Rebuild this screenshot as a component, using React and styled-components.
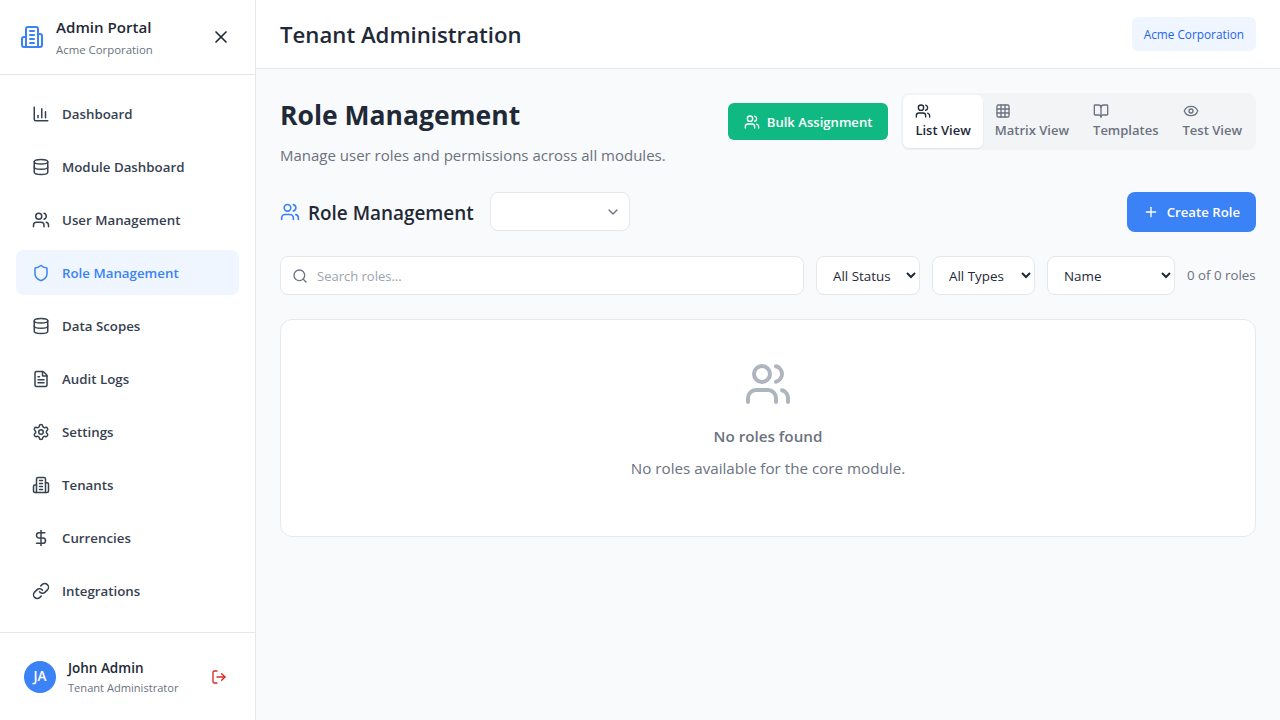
import React from 'react';
import styled, { createGlobalStyle } from 'styled-components';
import {
  BarChart3, BookOpen, Database, DollarSign, Eye, FileText, Grid3x3, Link, LogOut,
  Plus, Search, Settings, Shield, Users, X,
} from 'lucide-react';

const GlobalStyle = createGlobalStyle`
  * { box-sizing: border-box; }
  html, body { margin: 0; padding: 0; height: 100%; }
  body {
    font-family: "Open Sans", "Noto Sans", sans-serif;
    line-height: 1.5;
    color: #1f2937;
    background: #f9fafb;
  }
  button, input, select { font-family: inherit; }
`;

const chevron = `url("data:image/svg+xml,%3Csvg xmlns='http://www.w3.org/2000/svg' width='16' height='16' viewBox='0 0 24 24' fill='none' stroke='%236b7280' stroke-width='2' stroke-linecap='round' stroke-linejoin='round'%3E%3Cpath d='m6 9 6 6 6-6'/%3E%3C/svg%3E")`;

const Shell = styled.div`
  display: flex;
  width: 1280px;
  height: 720px;
  overflow: hidden;
`;

const Sidebar = styled.aside`
  width: 256px;
  flex: none;
  display: flex;
  flex-direction: column;
  background: #fff;
  border-right: 1px solid #e5e7eb;
`;

const Brand = styled.div`
  height: 75px;
  display: flex;
  align-items: center;
  gap: 12px;
  padding: 0 24px 0 20px;
  border-bottom: 1px solid #e5e7eb;
  color: #3b82f6;
`;

const BrandText = styled.div`
  flex: 1;
  min-width: 0;
`;

const BrandName = styled.div`
  font-size: 15.1px;
  line-height: 24px;
  font-weight: 600;
  color: #1f2937;
`;

const BrandSub = styled.div`
  margin-top: 2px;
  font-size: 11.4px;
  line-height: 18px;
  color: #6b7280;
`;

const CloseButton = styled.button`
  display: flex;
  padding: 0;
  border: 0;
  background: none;
  color: #1f2937;
`;

const Nav = styled.nav`
  flex: 1;
  display: flex;
  flex-direction: column;
  gap: 8px;
  padding: 16px;
`;

const NavItem = styled.a`
  display: flex;
  align-items: center;
  gap: 12px;
  height: 45px;
  padding: 0 16px;
  border-radius: 8px;
  font-size: 13.3px;
  font-weight: 600;
  color: ${props => props.$active ? '#3b82f6' : '#374151'};
  background: ${props => props.$active ? '#eff6ff' : 'transparent'};
`;

const NavLabel = styled.span`
  margin-top: 2px;
`;

const UserBox = styled.div`
  display: flex;
  align-items: center;
  gap: 12px;
  padding: 24px;
  border-top: 1px solid #e5e7eb;
`;

const Avatar = styled.div`
  width: 32px;
  height: 32px;
  flex: none;
  display: flex;
  align-items: center;
  justify-content: center;
  border-radius: 50%;
  background: #3b82f6;
  color: #fff;
  font-size: 13.5px;
  font-weight: 600;
`;

const UserText = styled.div`
  flex: 1;
  min-width: 0;
`;

const UserName = styled.div`
  padding-top: 1px;
  font-size: 13.5px;
  line-height: 21px;
  font-weight: 600;
  color: #1f2937;
`;

const UserRole = styled.div`
  font-size: 11.1px;
  line-height: 17px;
  color: #6b7280;
`;

const LogoutButton = styled.button`
  display: flex;
  padding: 4px;
  border: 0;
  background: none;
  color: #dc2626;
`;

const Main = styled.main`
  flex: 1;
  min-width: 0;
  display: flex;
  flex-direction: column;
`;

const TopBar = styled.header`
  height: 69px;
  flex: none;
  display: flex;
  align-items: center;
  justify-content: space-between;
  padding: 0 24px;
  background: #fff;
  border-bottom: 1px solid #e5e7eb;
`;

const TopTitle = styled.h1`
  margin: 0;
  padding-top: 2px;
  font-size: 22.2px;
  font-weight: 600;
  color: #1f2937;
`;

const TenantPill = styled.div`
  padding: 8px 12px;
  border-radius: 6px;
  background: #eff6ff;
  color: #2563eb;
  font-size: 11.8px;
  line-height: 18px;
  font-weight: 500;
`;

const Content = styled.div`
  flex: 1;
  padding: 24px;
`;

const PageHead = styled.div`
  display: flex;
  justify-content: space-between;
  align-items: flex-start;
  margin-bottom: 25px;
`;

const PageTitle = styled.h2`
  margin: 0 0 6px;
  font-size: 26.5px;
  font-weight: 700;
  color: #1f2937;
  line-height: 44px;
`;

const PageSub = styled.p`
  margin: 0;
  font-size: 15px;
  line-height: 24px;
  color: #6b7280;
`;

const HeadActions = styled.div`
  display: flex;
  align-items: center;
  gap: 13px;
`;

const BulkButton = styled.button`
  display: flex;
  align-items: center;
  gap: 7px;
  height: 37px;
  padding: 0 16px;
  border: 0;
  border-radius: 6px;
  background: #10b981;
  color: #fff;
  font-size: 13.1px;
  font-weight: 600;
`;

const Tabs = styled.div`
  display: flex;
  padding: 2px;
  border-radius: 8px;
  background: #f3f4f6;
`;

const Tab = styled.button`
  display: flex;
  flex-direction: column;
  align-items: flex-start;
  padding: 8px 12px 7px;
  border: 0;
  border-radius: 6px;
  font-size: 13px;
  line-height: 22px;
  font-weight: 600;
  color: ${props => props.$active ? '#1f2937' : '#6b7280'};
  background: ${props => props.$active ? '#fff' : 'transparent'};
  box-shadow: ${props => props.$active ? '0 1px 2px rgba(0,0,0,0.08)' : 'none'};
`;

const SectionRow = styled.div`
  display: flex;
  align-items: flex-start;
  justify-content: space-between;
  margin-bottom: 24px;
`;

const SectionLeft = styled.div`
  display: flex;
  align-items: center;
  gap: 16px;
`;

const SectionTitle = styled.h3`
  display: flex;
  align-items: center;
  gap: 8px;
  margin: 0;
  padding-top: 3px;
  font-size: 18.9px;
  font-weight: 600;
  color: #1f2937;
  svg { color: #3b82f6; margin-top: -2px; }
`;

const ModuleSelect = styled.select`
  appearance: none;
  width: 140px;
  height: 39px;
  border: 1px solid #e5e7eb;
  border-radius: 8px;
  background: #fff ${chevron} no-repeat right 8px center;
`;

const CreateButton = styled.button`
  display: flex;
  align-items: center;
  gap: 8px;
  height: 40px;
  padding: 0 16px;
  border: 0;
  border-radius: 8px;
  background: #3b82f6;
  color: #fff;
  font-size: 13.2px;
  font-weight: 600;
`;

const Filters = styled.div`
  display: flex;
  align-items: center;
  gap: 12px;
  margin-bottom: 24px;
`;

const SearchBox = styled.div`
  position: relative;
  flex: 1;
  min-width: 0;
  svg {
    position: absolute;
    left: 12px;
    top: 12px;
    color: #6b7280;
  }
`;

const SearchInput = styled.input`
  display: block;
  width: 100%;
  height: 39px;
  padding: 0 16px 0 36px;
  border: 1px solid #e5e7eb;
  border-radius: 8px;
  background: #fff;
  font-size: 13px;
  color: #1f2937;
  &::placeholder { color: #9ca3af; }
`;

const FilterSelect = styled.select`
  flex: none;
  height: 39px;
  padding: 0 0 0 12px;
  border: 1px solid #e5e7eb;
  border-radius: 8px;
  background: #fff;
  font-size: 13.4px;
  color: #1f2937;
  width: ${props => props.$w}px;
`;

const Count = styled.span`
  flex: none;
  width: 69px;
  padding-top: 1px;
  font-size: 13.3px;
  white-space: nowrap;
  color: #6b7280;
`;

const EmptyCard = styled.section`
  height: 218px;
  display: flex;
  flex-direction: column;
  align-items: center;
  padding-top: 40px;
  border: 1px solid #e5e7eb;
  border-radius: 12px;
  background: #fff;
  color: #6b7280;
  svg { color: #9ca3af; opacity: 0.8; }
`;

const EmptyTitle = styled.div`
  margin: 16px 0 8px;
  font-size: 15.2px;
  line-height: 24px;
  font-weight: 600;
`;

const EmptyText = styled.div`
  font-size: 15.2px;
  line-height: 24px;
`;

// the older lucide building-2, the one in the package has changed shape
const Building = ({ size }) => (
  <svg width={size} height={size} viewBox="0 0 24 24" fill="none" stroke="currentColor" strokeWidth="2" strokeLinecap="round" strokeLinejoin="round">
    <path d="M6 22V4a2 2 0 0 1 2-2h8a2 2 0 0 1 2 2v18Z" />
    <path d="M6 12H4a2 2 0 0 0-2 2v6a2 2 0 0 0 2 2h2" />
    <path d="M18 9h2a2 2 0 0 1 2 2v9a2 2 0 0 1-2 2h-2" />
    <path d="M10 6h4" />
    <path d="M10 10h4" />
    <path d="M10 14h4" />
    <path d="M10 18h4" />
  </svg>
);

const navItems = [
  { label: 'Dashboard', Icon: BarChart3 },
  { label: 'Module Dashboard', Icon: Database },
  { label: 'User Management', Icon: Users },
  { label: 'Role Management', Icon: Shield, active: true },
  { label: 'Data Scopes', Icon: Database },
  { label: 'Audit Logs', Icon: FileText },
  { label: 'Settings', Icon: Settings },
  { label: 'Tenants', Icon: Building },
  { label: 'Currencies', Icon: DollarSign },
  { label: 'Integrations', Icon: Link },
];

const tabs = [
  { label: 'List View', Icon: Users, active: true },
  { label: 'Matrix View', Icon: Grid3x3 },
  { label: 'Templates', Icon: BookOpen },
  { label: 'Test View', Icon: Eye },
];

export default function App() {
  return (
    <Shell>
      <GlobalStyle />
      <Sidebar>
        <Brand>
          <Building size={24} />
          <BrandText>
            <BrandName>Admin Portal</BrandName>
            <BrandSub>Acme Corporation</BrandSub>
          </BrandText>
          <CloseButton><X size={20} /></CloseButton>
        </Brand>
        <Nav>
          {navItems.map(({ label, Icon, active }) => (
            <NavItem key={label} $active={active}>
              <Icon size={18} />
              <NavLabel>{label}</NavLabel>
            </NavItem>
          ))}
        </Nav>
        <UserBox>
          <Avatar>JA</Avatar>
          <UserText>
            <UserName>John Admin</UserName>
            <UserRole>Tenant Administrator</UserRole>
          </UserText>
          <LogoutButton><LogOut size={16} /></LogoutButton>
        </UserBox>
      </Sidebar>
      <Main>
        <TopBar>
          <TopTitle>Tenant Administration</TopTitle>
          <TenantPill>Acme Corporation</TenantPill>
        </TopBar>
        <Content>
          <PageHead>
            <div>
              <PageTitle>Role Management</PageTitle>
              <PageSub>Manage user roles and permissions across all modules.</PageSub>
            </div>
            <HeadActions>
              <BulkButton><Users size={16} />Bulk Assignment</BulkButton>
              <Tabs>
                {tabs.map(({ label, Icon, active }) => (
                  <Tab key={label} $active={active}>
                    <Icon size={16} />
                    {label}
                  </Tab>
                ))}
              </Tabs>
            </HeadActions>
          </PageHead>
          <SectionRow>
            <SectionLeft>
              <SectionTitle><Users size={20} />Role Management</SectionTitle>
              <ModuleSelect />
            </SectionLeft>
            <CreateButton><Plus size={16} />Create Role</CreateButton>
          </SectionRow>
          <Filters>
            <SearchBox>
              <Search size={16} />
              <SearchInput placeholder="Search roles..." />
            </SearchBox>
            <FilterSelect $w={104}><option>All Status</option></FilterSelect>
            <FilterSelect $w={103}><option>All Types</option></FilterSelect>
            <FilterSelect $w={128}><option>Name</option></FilterSelect>
            <Count>0 of 0 roles</Count>
          </Filters>
          <EmptyCard>
            <Users size={48} />
            <EmptyTitle>No roles found</EmptyTitle>
            <EmptyText>No roles available for the core module.</EmptyText>
          </EmptyCard>
        </Content>
      </Main>
    </Shell>
  );
}
